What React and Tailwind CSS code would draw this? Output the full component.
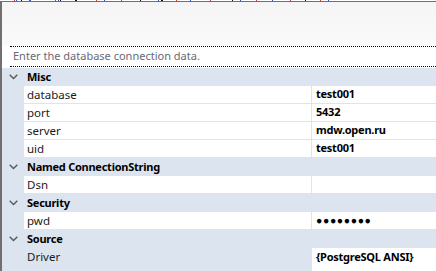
import React from 'react';

const font = { fontFamily: '"Noto Sans", "Open Sans", sans-serif' };

const groups = [
  {
    name: 'Misc',
    items: [
      ['database', 'test001'],
      ['port', '5432'],
      ['server', 'mdw.open.ru'],
      ['uid', 'test001'],
    ],
  },
  { name: 'Named ConnectionString', items: [['Dsn', '']] },
  { name: 'Security', items: [['pwd', '●●●●●●●●']] },
  { name: 'Source', items: [['Driver', '{PostgreSQL ANSI}']] },
];

const marks = [
  [14, '#c23b3b'], [16, '#2d4fb8'], [21, '#111'], [29, '#c23b3b'], [30, '#2d4fb8'],
  [55, '#c23b3b'], [58, '#2d4fb8'], [60, '#111'], [75, '#111'], [76, '#111'],
  [96, '#c23b3b'], [104, '#2d4fb8'], [121, '#c23b3b'], [140, '#111'], [158, '#2d4fb8'],
  [161, '#111'], [162, '#111'], [176, '#c23b3b'], [190, '#2d4fb8'], [210, '#c23b3b'],
  [232, '#111'], [240, '#2d4fb8'], [256, '#c23b3b'], [272, '#2d4fb8'], [290, '#c23b3b'],
  [305, '#111'], [320, '#c23b3b'], [328, '#2d4fb8'],
];

function Chevron() {
  return (
    <svg width="9" height="6" viewBox="0 0 9 6" className="block">
      <polyline points="0.7,0.8 4.5,4.6 8.3,0.8" fill="none" stroke="#5a5a5a" strokeWidth="1.4" />
    </svg>
  );
}

function CategoryRow({ name }) {
  return (
    <div className="flex h-[18px] items-center bg-[#dce4ef]">
      <div className="w-[22px] flex justify-center pl-[1px]">
        <Chevron />
      </div>
      <span className="pl-[3px] text-[11px] font-bold tracking-[-0.25px] text-black">{name}</span>
    </div>
  );
}

function PropRow({ name, value, selected }) {
  return (
    <div className="flex h-[18px] bg-[#dce4ef]">
      <div className="w-[22px]" />
      <div
        className={
          'flex w-[287px] items-center pl-[3px] text-[11.5px] text-[#1a1a1a] ' +
          (selected ? 'bg-[#dce4ef]' : 'bg-white border-b border-[#dce4ef]')
        }
      >
        {name}
      </div>
      <div className="w-[1px] bg-[#dce4ef]" />
      <div
        className={
          'flex flex-1 items-center bg-white pl-[4px] font-bold text-black ' +
          (selected ? '' : 'border-b border-[#dce4ef]') +
          (name === 'pwd' ? ' text-[10.5px] tracking-[0.6px]' : ' text-[11px] tracking-[-0.25px]')
        }
      >
        {value}
      </div>
    </div>
  );
}

export default function App() {
  return (
    <div className="w-[436px] h-[271px] overflow-hidden bg-white" style={font}>
      {/* clipped text above */}
      <div className="relative h-[1px]">
        {marks.map(([x, c], i) => (
          <div key={i} className="absolute top-0 h-[1px] w-[1px]" style={{ left: x, background: c }} />
        ))}
      </div>
      <div className="h-[270px] border-l-2 border-t border-[#707070] flex flex-col">
        <div className="h-[44px] bg-gradient-to-b from-[#f5f5f5] to-[#fafafa]" />
        <div className="ml-[8px] border-t border-dotted border-black" />
        <div className="h-[19px] bg-white flex items-center pl-[11px] text-[11px] text-[#6a6878]">
          Enter the database connection data.
        </div>
        <div className="ml-[8px] border-t border-dotted border-black" />
        <div className="h-[1px] bg-white" />
        {groups.map((g) => (
          <div key={g.name}>
            <CategoryRow name={g.name} />
            {g.items.map(([n, v]) => (
              <PropRow key={n} name={n} value={v} selected={n === 'Driver'} />
            ))}
          </div>
        ))}
        <div className="flex-1 flex">
          <div className="w-[310px] bg-[#dce4ef]" />
          <div className="flex-1 bg-white" />
        </div>
      </div>
    </div>
  );
}
